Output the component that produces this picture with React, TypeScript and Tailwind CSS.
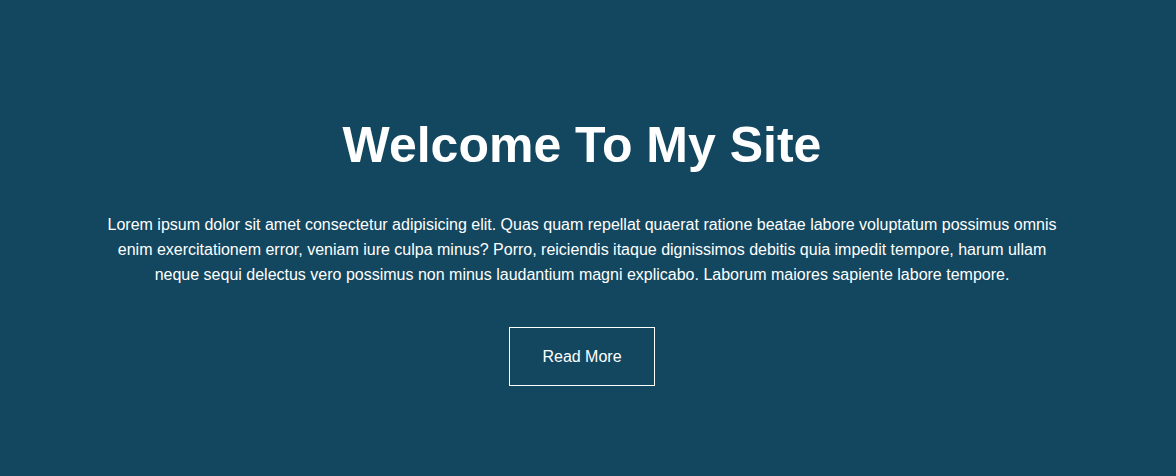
export default function App() {
  return (
    <div
      className="flex h-[476px] w-full flex-col items-center bg-[#13475f] pr-[12px] text-white"
      style={{ fontFamily: '"Liberation Sans", Arial, sans-serif' }}
    >
      <h1 className="mt-[112px] text-[50px] font-bold leading-[66px]">Welcome To My Site</h1>
      <p className="mt-[34px] w-[960px] text-center text-[16px] leading-[25px]">
        Lorem ipsum dolor sit amet consectetur adipisicing elit. Quas quam repellat quaerat ratione beatae labore
        voluptatum possimus omnis enim exercitationem error, veniam iure culpa minus? Porro, reiciendis itaque
        dignissimos debitis quia impedit tempore, harum ullam neque sequi delectus vero possimus non minus laudantium
        magni explicabo. Laborum maiores sapiente labore tempore.
      </p>
      <button className="mt-[40px] flex h-[59px] w-[146px] items-center justify-center border border-white text-[16px]">
        Read More
      </button>
    </div>
  );
}
